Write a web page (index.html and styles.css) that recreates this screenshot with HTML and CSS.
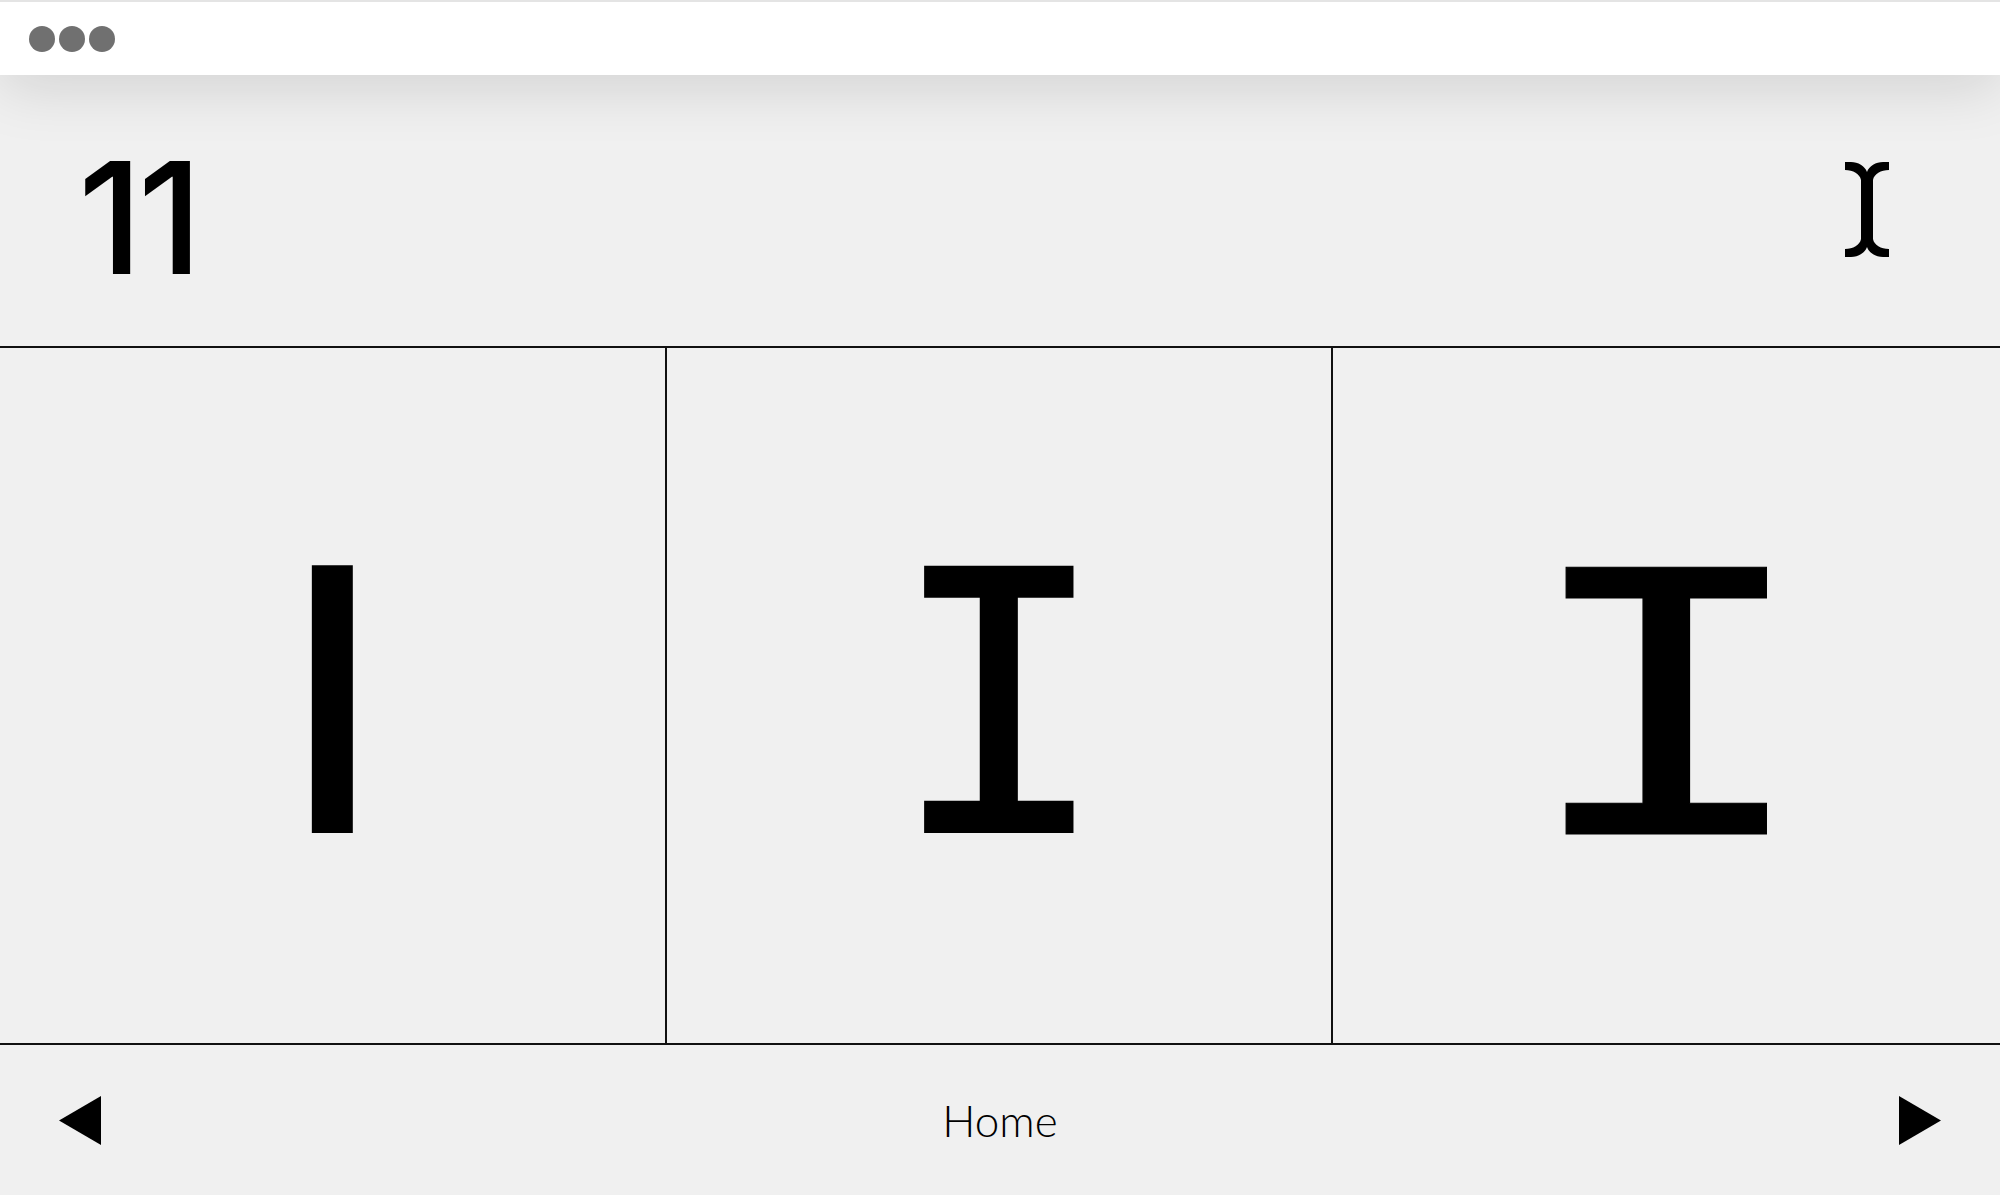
FILE: index.html
```html
<!DOCTYPE html>
<html lang="en">
<head>
  <meta charset="UTF-8">
  <meta name="viewport" content="width=device-width, initial-scale=1.0">
  <title>Specimen</title>
  <link rel="stylesheet" href="styles.css">
</head>
<body>
  <div class="window-bar">
    <span class="dot"></span>
    <span class="dot"></span>
    <span class="dot"></span>
  </div>

  <div class="page">
    <div class="page-head">
      <div class="page-num">11</div>
      <svg class="cursor" viewBox="0 0 44 95" width="44" height="95">
        <path d="M0 0 H6 C13 0 20 4 22 10 C24 4 31 0 38 0 H44 V8 C36 8 29 12 28 18 H16 C15 12 8 8 0 8 Z" fill="#000"/>
        <rect x="16" y="16" width="12" height="63" fill="#000"/>
        <path d="M0 95 H6 C13 95 20 91 22 85 C24 91 31 95 38 95 H44 V87 C36 87 29 83 28 77 H16 C15 83 8 87 0 87 Z" fill="#000"/>
      </svg>
    </div>

    <div class="glyphs">
      <div class="cell"><span class="glyph sans">I</span></div>
      <div class="cell"><span class="glyph slab">I</span></div>
      <div class="cell"><span class="glyph mono">I</span></div>
    </div>

    <div class="page-foot">
      <svg class="arrow" viewBox="0 0 42 49" width="42" height="49"><polygon points="0,24.5 42,0 42,49" fill="#000"/></svg>
      <a class="home" href="#">Home</a>
      <svg class="arrow" viewBox="0 0 42 49" width="42" height="49"><polygon points="0,0 42,24.5 0,49" fill="#000"/></svg>
    </div>
  </div>
</body>
</html>
```

FILE: styles.css
```css
body {
  margin: 0;
  background-color: #f0f0f0;
  font-family: Inter, "Liberation Sans", sans-serif;
  color: #000;
  overflow: hidden;
}

.window-bar {
  position: relative;
  z-index: 2;
  height: 73px;
  background-color: #fff;
  border-top: 2px solid #e4e4e4;
  display: flex;
  align-items: center;
  gap: 4px;
  padding-left: 29px;
  box-shadow: 0 12px 60px rgba(0, 0, 0, 0.13);
}

.dot {
  width: 26px;
  height: 26px;
  border-radius: 50%;
  background-color: #707070;
}

.page {
  height: 1120px;
  display: flex;
  flex-direction: column;
}

.page-head {
  height: 206px;
  padding: 65px 111px 0 78px;
  display: flex;
  justify-content: space-between;
  align-items: flex-start;
  border-bottom: 2px solid #111;
}

.page-num {
  font-size: 156px;
  line-height: 1;
  font-weight: 550;
  letter-spacing: -5px;
}

.cursor {
  margin-top: 22px;
}

.glyphs {
  height: 695px;
  display: grid;
  grid-template-columns: repeat(3, 1fr);
  border-bottom: 2px solid #111;
}

.cell {
  display: flex;
  justify-content: center;
  align-items: center;
  border-right: 2px solid #111;
}

.cell:last-child {
  border-right: none;
}

.glyph {
  line-height: 1;
  display: inline-block;
}

.sans {
  font-size: 368px;
  font-weight: 500;
  padding-top: 6px;
}

.slab {
  font-family: "DejaVu Sans Mono", monospace;
  font-size: 364px;
  margin-top: 20px;
  -webkit-text-stroke: 2px #000;
}

.mono {
  font-family: "Liberation Mono", monospace;
  font-size: 405px;
  margin-top: 61px;
  -webkit-text-stroke: 1px #000;
  transform: scaleX(1.23);
}

.page-foot {
  flex: 1;
  display: flex;
  justify-content: space-between;
  align-items: center;
  padding: 0 59px 0 59px;
}

.home {
  font-family: Lato, "Liberation Sans", sans-serif;
  font-weight: 300;
  font-size: 44px;
  color: #000;
  text-decoration: none;
}
```
